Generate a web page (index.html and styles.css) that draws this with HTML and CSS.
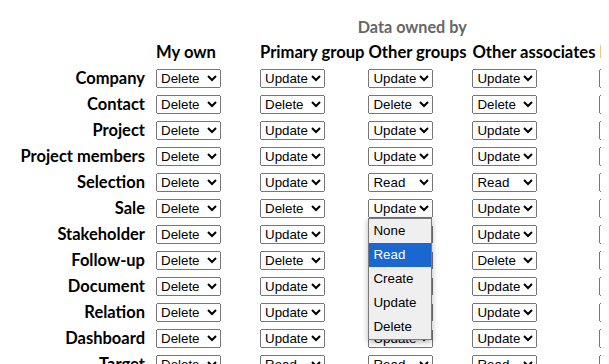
FILE: index.html
```html
<!DOCTYPE html>
<html>
<head>
<meta charset="utf-8">
<link rel="stylesheet" href="styles.css">
</head>
<body>
<table class="rights">
  <thead>
    <tr class="group-row">
      <th></th>
      <th colspan="5" class="group">Data owned by</th>
    </tr>
    <tr class="col-row">
      <th></th>
      <th class="col">My own</th>
      <th class="col">Primary group</th>
      <th class="col">Other groups</th>
      <th class="col">Other associates</th>
      <th class="col">Everyone</th>
    </tr>
  </thead>
  <tbody id="body"></tbody>
</table>
<script src="app.js"></script>
</body>
</html>
```

FILE: app.js
```js
const opts = ["None", "Read", "Create", "Update", "Delete"];
const rows = [
  ["Company", "Delete", "Update", "Update", "Update", "Read"],
  ["Contact", "Delete", "Delete", "Delete", "Delete", "Read"],
  ["Project", "Delete", "Update", "Update", "Update", "Read"],
  ["Project members", "Delete", "Update", "Update", "Update", "Read"],
  ["Selection", "Delete", "Update", "Read", "Read", "Read"],
  ["Sale", "Delete", "Delete", "Update", "Update", "Read"],
  ["Stakeholder", "Delete", "Update", "Update", "Update", "Read"],
  ["Follow-up", "Delete", "Delete", "Delete", "Delete", "Update"],
  ["Document", "Delete", "Update", "Update", "Update", "Read"],
  ["Relation", "Delete", "Update", "Update", "Update", "Read"],
  ["Dashboard", "Delete", "Update", "Update", "Update", "Read"],
  ["Target", "Delete", "Read", "Read", "Read", "Read"]
];
const tbody = document.getElementById("body");
rows.forEach((r, ri) => {
  const tr = document.createElement("tr");
  const th = document.createElement("th");
  th.className = "label";
  th.textContent = r[0];
  tr.appendChild(th);
  for (let c = 1; c < r.length; c++) {
    const td = document.createElement("td");
    td.className = "cell";
    const sel = document.createElement("select");
    sel.className = "right";
    opts.forEach(o => {
      const op = document.createElement("option");
      op.textContent = o;
      if (o === r[c]) op.selected = true;
      sel.appendChild(op);
    });
    td.appendChild(sel);
    if (ri === 5 && c === 3) {
      td.classList.add("open");
      const list = document.createElement("div");
      list.className = "popup";
      opts.forEach(o => {
        const it = document.createElement("div");
        it.className = "popup-item" + (o === "Read" ? " hover" : "");
        it.textContent = o;
        list.appendChild(it);
      });
      td.appendChild(list);
    }
    tr.appendChild(td);
  }
  tbody.appendChild(tr);
});
```

FILE: styles.css
```css
html, body {
  overflow: hidden;
}
body {
  margin: 8px;
  background: #fff;
  font-family: Lato, "Liberation Sans", sans-serif;
  color: #000;
}
.rights {
  border-spacing: 2px;
  width: max-content;
}
.rights th, .rights td {
  padding: 1px;
  line-height: 18px;
}
.rights .group-row th {
  height: 25px;
  vertical-align: bottom;
  padding-bottom: 2px;
}
.rights .group {
  font-size: 16.2px;
  font-weight: bold;
  color: #666;
  text-align: center;
  padding-right: 32px;
}
.col-row th {
  height: 22px;
}
.col {
  font-size: 16.6px;
  font-weight: bold;
  text-align: left;
  width: 100px;
  white-space: nowrap;
}
.rights .label {
  font-size: 16.5px;
  font-weight: bold;
  text-align: right;
  white-space: nowrap;
  width: 135px;
  padding: 1px 8px 1px 0;
  height: 22px;
}
.cell {
  vertical-align: middle;
}
.cell.open {
  position: relative;
}
select.right {
  font: 13.333px "Liberation Sans", Arial, sans-serif;
  margin: 0;
}
.popup {
  position: absolute;
  left: 1px;
  top: 22px;
  width: 62px;
  background: #efefef;
  border: 1px solid #7a7a7a;
  box-shadow: 0 2px 6px rgba(0, 0, 0, 0.3);
  z-index: 5;
  font: 13.333px "Liberation Sans", Arial, sans-serif;
}
.popup-item {
  height: 24px;
  line-height: 24px;
  padding-left: 4px;
  color: #000;
}
.popup-item.hover {
  background: #1a67d2;
  color: #fff;
}
```
